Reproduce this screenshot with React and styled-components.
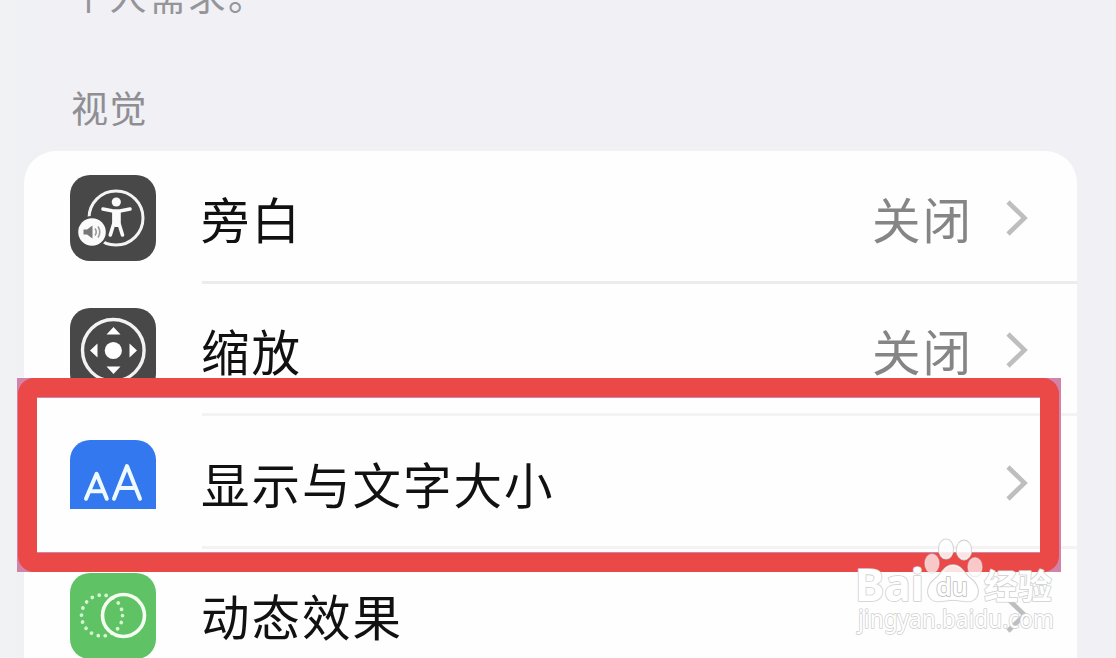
import React from "react";
import styled, { createGlobalStyle } from "styled-components";

const GlobalStyle = createGlobalStyle`
* { box-sizing:border-box; }
html, body {
    margin:0;
    padding:0;
    overflow:hidden;
    background:#f0f0f5;
}
`;

const Screen = styled.div`
    position:relative;
    width:1116px;
    height:658px;
    padding:0 39px 0 24px;
    overflow:hidden;
    background:linear-gradient(90deg, #f0f2f3 0, #f0f0f5 50px, #f0f0f5 100%);
    font-family:"Noto Sans CJK SC", sans-serif;
`;

const Note = styled.p`
    height:16px;
    margin:0;
    padding-left:46px;
    display:flex;
    align-items:flex-end;
    font-size:37px;
    line-height:42px;
    letter-spacing:2.5px;
    color:#949499;
`;

const SectionTitle = styled.h2`
    height:135px;
    margin:0;
    padding:69px 0 0 47px;
    font-size:37px;
    font-weight:400;
    line-height:44px;
    letter-spacing:1.5px;
    color:#8e8e93;
`;

const Card = styled.div`
    height:560px;
    border-radius:32px 32px 0 0;
    background:#fefefe;
`;

const Row = styled.div`
    display:flex;
    height:132.5px;
    padding-left:46px;
`;

const IconBox = styled.div`
    width:86px;
    height:${p => p.$height || 86}px;
    margin-top:24px;
    border-radius:${p => p.$height ? "20px 20px 0 0" : "20px"};
    overflow:hidden;
    background:${p => p.$color};
`;

const RowBody = styled.div`
    flex:1;
    display:flex;
    align-items:center;
    margin-left:46px;
    padding-right:47px;
    border-bottom:3px solid ${p => p.$faint ? "#f4f2f3" : "#ececee"};
`;

const Label = styled.span`
    flex:1;
    margin-left:-1px;
    padding-top:4px;
    font-size:48.5px;
    line-height:60px;
    letter-spacing:2px;
    color:#111;
`;

const Value = styled.span`
    padding-top:4px;
    margin-right:31px;
    font-size:48.5px;
    line-height:60px;
    letter-spacing:2px;
    color:#858585;
`;

const Chevron = styled.svg`
    width:26px;
    height:40px;
    margin-top:4px;
`;

const Halo = styled.div`
    position:absolute;
    left:17px;
    top:378px;
    width:1043.5px;
    height:194px;
    border:20px solid #d283a8;
    filter:blur(0.6px);
`;

const Frame = styled.div`
    position:absolute;
    left:18px;
    top:378.4px;
    width:1040.5px;
    height:193.4px;
    border:19px solid #eb4848;
    border-radius:16px;
`;

const Watermark = styled.svg`
    position:absolute;
    left:850px;
    top:532px;
`;

const VoiceOverIcon = () => (
    <svg width="86" height="86" viewBox="0 0 86 86" fill="none">
        <circle cx="46" cy="43" r="27" stroke="#f4f4f4" strokeWidth="3" />
        <circle cx="46.3" cy="27" r="4.6" fill="#fafafa" />
        <path d="M33 34 L43 36 H50 L60 34 M44 37 V48 L40.3 60 M48.8 37 V48 L52.5 60" stroke="#fafafa" strokeWidth="3.6" strokeLinecap="round" />
        <path d="M42.5 35 H50.5 V49 L48 52 H45 L42.5 49Z" fill="#fafafa" />
        <circle cx="22" cy="57" r="16" fill="#484848" />
        <circle cx="22" cy="57" r="13.8" fill="#fafafa" />
        <path d="M13.5 54.5 H17 L22.5 50.5 V63.5 L17 59.5 H13.5Z" fill="#777" />
        <path d="M25 53.5 Q27.5 57 25 60.5 M28 51.5 Q31.5 57 28 62.5" stroke="#999" strokeWidth="1.6" />
    </svg>
);

const ZoomIcon = () => (
    <svg width="86" height="86" viewBox="0 0 86 86" fill="none">
        <circle cx="43.3" cy="42.3" r="30.8" stroke="#f2f2f2" strokeWidth="3.4" />
        <circle cx="43.3" cy="42.5" r="8.6" fill="#fff" />
        <path d="M43.5 19 L50.5 26.5 H36.5Z M43.5 66 L50.5 58.5 H36.5Z M20 42.5 L27.5 35.5 V49.5Z M67 42.5 L59.5 35.5 V49.5Z" fill="#fff" />
    </svg>
);

const TextSizeIcon = () => (
    <svg width="86" height="69" viewBox="0 0 86 69" fill="none" stroke="#eefaff" strokeWidth="4" strokeLinecap="round" strokeLinejoin="round">
        <path d="M16 58.8 L26.6 33.8 L36.8 58.8 M19.5 51.3 H33.5" />
        <path d="M44 58.8 L57 26 L70 58.8 M48.5 48 H65.5" />
    </svg>
);

const MotionIcon = () => (
    <svg width="86" height="86" viewBox="0 0 86 86" fill="none">
        <circle cx="32" cy="42.5" r="20.5" stroke="#d4f7d2" strokeWidth="3.7" strokeLinecap="round" strokeDasharray="0.1 7.056" />
        <circle cx="53.5" cy="42.5" r="21" stroke="#f4fff2" strokeWidth="3.6" />
    </svg>
);

const rows = [
    { label: "旁白", value: "关闭", color: "#484848", icon: <VoiceOverIcon /> },
    { label: "缩放", value: "关闭", color: "#484848", faint: true, icon: <ZoomIcon /> },
    { label: "显示与文字大小", color: "#3478f0", height: 69, faint: true, icon: <TextSizeIcon /> },
    { label: "动态效果", color: "#5fc264", icon: <MotionIcon /> },
];

const Logo = () => (
    <Watermark width="230" height="115" viewBox="0 0 230 115">
        <g fill="#fff" stroke="#cfcfcf" strokeWidth="1.6" strokeLinejoin="round" paintOrder="stroke">
            <text x="5" y="69" fontFamily="Noto Sans, sans-serif" fontWeight="700" fontSize="44" textLength="69" lengthAdjust="spacingAndGlyphs">Bai</text>
            <ellipse cx="82" cy="31.5" rx="7.2" ry="9.6" fillOpacity="0.7" strokeOpacity="0.4" />
            <ellipse cx="96" cy="17" rx="7.2" ry="9.8" fillOpacity="0.85" />
            <ellipse cx="114" cy="18" rx="7.4" ry="9.6" fillOpacity="0.85" />
            <ellipse cx="125" cy="35" rx="7.2" ry="9.4" fillOpacity="0.7" strokeOpacity="0.4" />
            <path d="M103 33 C94 33 92 42 85 47 C77 53 76 62 81 67 C87 72 95 68 103 68 C111 68 119 72 125 67 C130 62 129 53 121 47 C114 42 112 33 103 33Z" fillOpacity="0.85" />
            <text x="86" y="64" fontFamily="Noto Sans, sans-serif" fontSize="26" fontWeight="600" textLength="32" lengthAdjust="spacingAndGlyphs" stroke="#bbb">du</text>
            <text x="134" y="67" fontFamily="Noto Sans CJK SC, sans-serif" fontWeight="700" fontSize="34" textLength="68" lengthAdjust="spacingAndGlyphs">经验</text>
            <text x="8" y="96" fontFamily="Noto Sans, sans-serif" fontSize="25" textLength="196" lengthAdjust="spacingAndGlyphs">jingyan.baidu.com</text>
        </g>
    </Watermark>
);

const App = () => {
    return (
        <>
            <GlobalStyle />
            <Screen>
                <Note>个人需求。</Note>
                <SectionTitle>视觉</SectionTitle>
                <Card>
                    {rows.map((row) => (
                        <Row key={row.label}>
                            <IconBox $color={row.color} $height={row.height}>{row.icon}</IconBox>
                            <RowBody $faint={row.faint}>
                                <Label>{row.label}</Label>
                                {row.value && <Value>{row.value}</Value>}
                                <Chevron viewBox="0 0 26 40">
                                    <path d="M4 4 L20.5 20 L4 36" fill="none" stroke="#bebebe" strokeWidth="4.6" />
                                </Chevron>
                            </RowBody>
                        </Row>
                    ))}
                </Card>
                <Halo />
                <Frame />
                <Logo />
            </Screen>
        </>
    );
};

export default App;
